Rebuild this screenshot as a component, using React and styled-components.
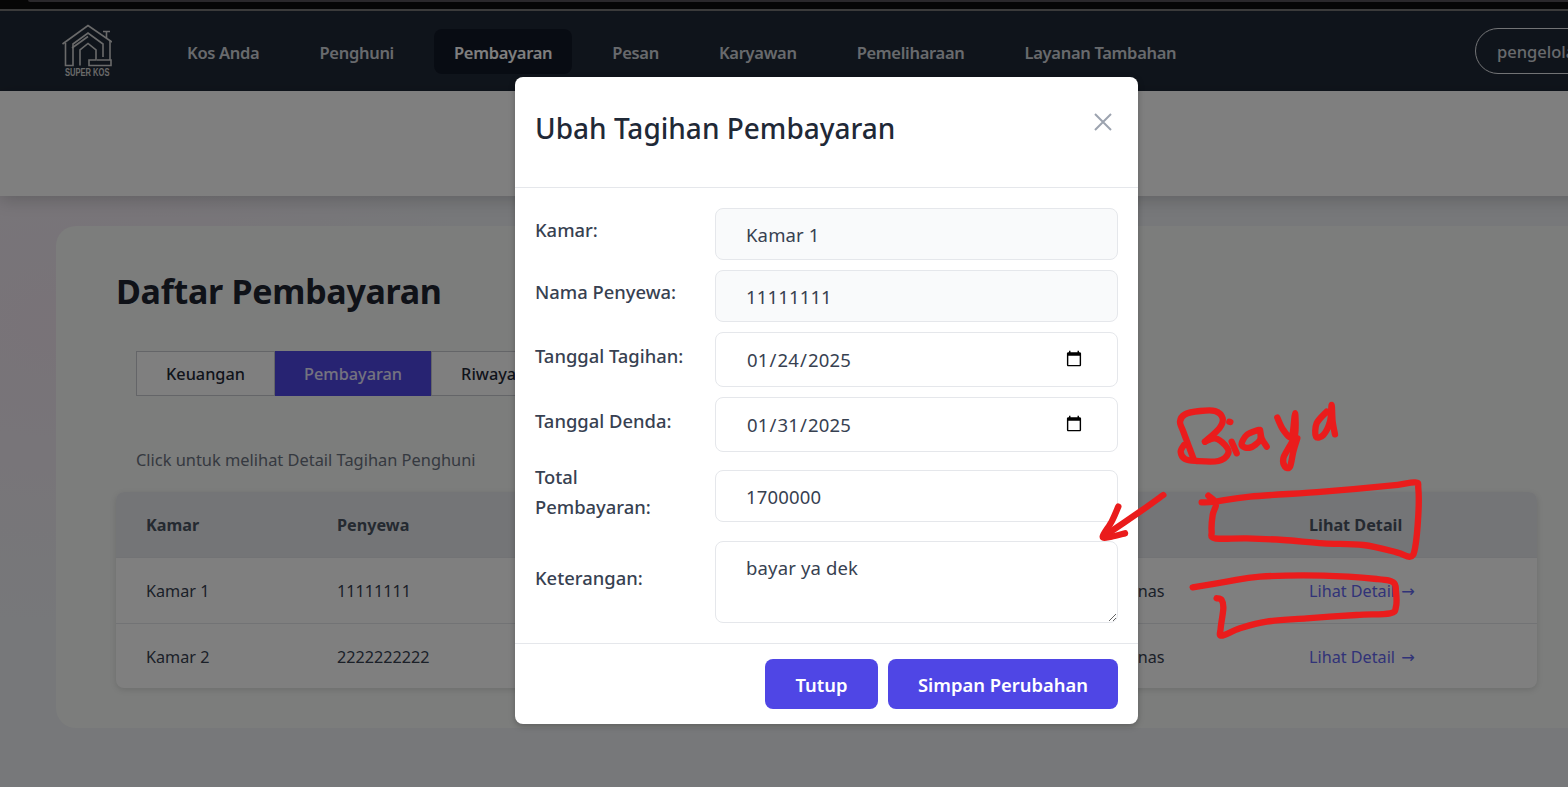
import styled, { createGlobalStyle } from 'styled-components';

const GlobalStyle = createGlobalStyle`
  * { box-sizing: border-box; }
  html, body { margin: 0; padding: 0; background: #000; }
  body { font-family: "Noto Sans", "Open Sans", sans-serif; overflow: hidden; }
`;

const NAV_ITEMS = ['Kos Anda', 'Penghuni', 'Pembayaran', 'Pesan', 'Karyawan', 'Pemeliharaan', 'Layanan Tambahan'];
const TABLE_ROWS = [
  { room: 'Kamar 1', tenant: '11111111' },
  { room: 'Kamar 2', tenant: '2222222222' },
];

// strokes read off the reference, in 3x crop coordinates
const WORD_STROKES = [
  [[100, 190], [85, 150], [70, 110], [60, 80], [75, 58], [120, 48], [165, 48], [188, 70], [178, 100], [135, 140]],
  [[135, 140], [165, 130], [195, 150], [205, 175], [175, 198], [110, 198], [75, 192], [62, 170], [72, 150]],
  [[208, 80], [211, 81]],
  [[215, 140], [230, 175]],
  [[295, 105], [260, 120], [245, 150], [270, 158], [300, 135], [300, 105], [305, 130], [320, 155]],
  [[352, 68], [370, 105], [395, 125], [405, 55], [405, 120], [385, 160], [370, 190], [375, 215], [390, 215], [400, 170], [412, 130]],
  [[500, 50], [470, 85], [468, 125], [490, 120], [510, 80], [515, 30], [518, 80], [525, 118]],
];
const BOX_STROKES = [
  [[35, 82], [75, 80], [180, 65], [400, 50], [600, 32], [675, 22], [685, 40], [685, 120], [675, 220], [660, 245], [620, 232], [520, 210], [400, 205], [280, 195], [170, 190], [75, 190], [65, 170], [68, 120], [78, 85], [55, 62]],
  [[8, 337], [110, 320], [210, 305], [400, 302], [560, 312], [610, 322], [618, 350], [618, 395], [600, 415], [500, 420], [350, 430], [230, 440], [150, 460], [95, 482], [92, 460], [100, 400], [95, 375], [80, 370]],
];
const ARROW_STROKES = [
  [[370, 345], [300, 395], [190, 470]],
  [[235, 380], [215, 425], [188, 470], [215, 470], [255, 460]],
];

const smooth = (pts) => {
  let d = `M${pts[0][0]} ${pts[0][1]}`;
  for (let i = 0; i < pts.length - 1; i++) {
    const p0 = pts[i - 1] || pts[i];
    const p1 = pts[i];
    const p2 = pts[i + 1];
    const p3 = pts[i + 2] || p2;
    const c1 = [p1[0] + (p2[0] - p0[0]) / 6, p1[1] + (p2[1] - p0[1]) / 6];
    const c2 = [p2[0] - (p3[0] - p1[0]) / 6, p2[1] - (p3[1] - p1[1]) / 6];
    d += ` C${c1[0]} ${c1[1]} ${c2[0]} ${c2[1]} ${p2[0]} ${p2[1]}`;
  }
  return d;
};

function Strokes({ x, y, list }) {
  return (
    <g transform={`translate(${x} ${y}) scale(0.3333)`}>
      {list.map((pts, i) => <path key={i} d={smooth(pts)} />)}
    </g>
  );
}

function Logo() {
  return (
    <LogoSvg viewBox="0 0 50 54">
      <g fill="none" stroke="#d4d4d4" strokeWidth="1.6">
        <path d="M0.5 20 L26 1.5 L50 18" />
        <path d="M41 7.5 H48 M44.5 7.5 V14" />
        <path d="M3.5 19 V41.5 H11 V20 L26 9 L41 20 V33" />
        <path d="M10 24 L26 12.5" />
        <path d="M18 41.5 V26 L26 19.5 L34 26 V36 H27 V41.5 H49 V36 H35" />
        <path d="M48 16 V36" />
      </g>
      <text transform="translate(3 52) scale(0.72 1)" fontFamily='"Liberation Sans", sans-serif' fontSize="10.5" fontWeight="700" fill="#d4d4d4">SUPER KOS</text>
    </LogoSvg>
  );
}

function Field({ label, children }) {
  return (
    <FieldRow>
      <FieldLabel>{label}</FieldLabel>
      {children}
    </FieldRow>
  );
}

export default function App() {
  return (
    <>
      <GlobalStyle />
      <Screen>
        <TopStrip><BrowserEdge /></TopStrip>
        <Page>
          <Nav>
            <Logo />
            <NavLinks>
              {NAV_ITEMS.map((item) => (
                <NavLink key={item} $active={item === 'Pembayaran'}>{item}</NavLink>
              ))}
            </NavLinks>
            <UserPill>pengelola</UserPill>
          </Nav>
          <SubHeader />
          <Main>
            <Card>
              <Heading>Daftar Pembayaran</Heading>
              <Tabs>
                <Tab>Keuangan</Tab>
                <Tab $active>Pembayaran</Tab>
                <Tab>Riwayat</Tab>
              </Tabs>
              <Note>Click untuk melihat Detail Tagihan Penghuni</Note>
              <Table>
                <HeadRow>
                  <span>Kamar</span>
                  <span>Penyewa</span>
                  <LinkCell>Lihat Detail</LinkCell>
                </HeadRow>
                {TABLE_ROWS.map((row) => (
                  <BodyRow key={row.room}>
                    <span>{row.room}</span>
                    <span>{row.tenant}</span>
                    <StatusCell>Belum Lunas</StatusCell>
                    <DetailLink>Lihat Detail <Arrow>→</Arrow></DetailLink>
                  </BodyRow>
                ))}
              </Table>
            </Card>
          </Main>
          <Backdrop>
            <Modal>
              <ModalHeader>
                <ModalTitle>Ubah Tagihan Pembayaran</ModalTitle>
                <CloseButton aria-label="Tutup">
                  <svg width="18" height="18" viewBox="0 0 18 18" fill="none" stroke="currentColor" strokeWidth="2">
                    <path d="M1 1 L17 17 M17 1 L1 17" />
                  </svg>
                </CloseButton>
              </ModalHeader>
              <ModalBody>
                <Field label="Kamar:"><TextInput $readonly readOnly defaultValue="Kamar 1" /></Field>
                <Field label="Nama Penyewa:"><TextInput $readonly readOnly defaultValue="11111111" /></Field>
                <Field label="Tanggal Tagihan:"><DateInput type="date" defaultValue="2025-01-24" /></Field>
                <Field label="Tanggal Denda:"><DateInput type="date" defaultValue="2025-01-31" /></Field>
                <Field label="Total Pembayaran:"><TextInput defaultValue="1700000" /></Field>
                <Field label="Keterangan:"><NoteInput defaultValue="bayar ya dek" /></Field>
              </ModalBody>
              <ModalFooter>
                <PrimaryButton $width={113}>Tutup</PrimaryButton>
                <PrimaryButton $width={230}>Simpan Perubahan</PrimaryButton>
              </ModalFooter>
            </Modal>
          </Backdrop>
        </Page>
        <Scribble viewBox="0 0 1568 787">
          <Strokes x={1160} y={395} list={WORD_STROKES} />
          <Strokes x={1190} y={475} list={BOX_STROKES} />
          <Strokes x={1040} y={380} list={ARROW_STROKES} />
        </Scribble>
      </Screen>
    </>
  );
}

const Screen = styled.div`
  position: relative;
  width: 1568px;
  height: 787px;
  overflow: hidden;
  display: flex;
  flex-direction: column;
  background: #050505;
`;

const TopStrip = styled.div`
  flex: none;
  height: 11px;
  background: #060606;
  border-bottom: 2px solid #3b3b3b;
  padding-left: 28px;
`;

const BrowserEdge = styled.div`
  height: 2px;
  background: #2a282b;
  border-bottom-left-radius: 4px;
`;

const Page = styled.div`
  position: relative;
  flex: 1;
  width: 1653px;
  background:
    radial-gradient(ellipse 420px 300px at 60px 40%, rgba(245, 222, 238, 0.55), rgba(245, 222, 238, 0) 100%),
    #eef0f4;
`;

const Nav = styled.nav`
  height: 80px;
  display: flex;
  align-items: center;
  padding: 0 40px 0 62px;
  background: #1f2937;
`;

const LogoSvg = styled.svg`
  width: 50px;
  height: 54px;
  flex: none;
  margin-right: 55px;
`;

const NavLinks = styled.div`
  display: flex;
  gap: 20px;
  flex: 1;
`;

const NavLink = styled.a`
  height: 45px;
  padding: 2px 20px 0;
  display: flex;
  align-items: center;
  border-radius: 8px;
  font-size: 16.5px;
  font-weight: 600;
  letter-spacing: -0.3px;
  color: ${(p) => (p.$active ? '#ffffff' : '#d1d5db')};
  background: ${(p) => (p.$active ? '#111827' : 'transparent')};
`;

const UserPill = styled.div`
  width: 138px;
  height: 46px;
  padding: 0 21px;
  display: flex;
  align-items: center;
  border: 1px solid #e5e7eb;
  border-radius: 23px;
  font-size: 16.5px;
  font-weight: 500;
  color: #d1d5db;
`;

const SubHeader = styled.div`
  height: 105px;
  background: #ffffff;
  box-shadow: 0 4px 16px rgba(0, 0, 0, 0.18);
  position: relative;
`;

const Main = styled.main`
  padding: 30px 56px;
`;

const Card = styled.section`
  height: 502px;
  padding: 40px 60px;
  border-radius: 20px;
  background: #f8faf8;
`;

const Heading = styled.h1`
  margin: 0 0 35px 0;
  font-size: 34px;
  line-height: 50px;
  font-weight: 700;
  letter-spacing: -0.3px;
  color: #1f2430;
`;

const Tabs = styled.div`
  display: flex;
  height: 45px;
  margin-left: 20px;
`;

const Tab = styled.div`
  padding: 1px 29px 0;
  display: flex;
  align-items: center;
  font-size: 16.3px;
  font-weight: 500;
  border: ${(p) => (p.$active ? 'none' : '1px solid #c8cbd0')};
  color: ${(p) => (p.$active ? '#e8e6ff' : '#1f2937')};
  background: ${(p) => (p.$active ? '#4f46e5' : '#ffffff')};
`;

const Note = styled.p`
  margin: 52px 0 20px 20px;
  font-size: 16.4px;
  line-height: 24px;
  color: #6b7280;
`;

const Table = styled.div`
  height: 196px;
  background: #ffffff;
  border-radius: 8px;
  box-shadow: 0 2px 6px rgba(0, 0, 0, 0.12);
  overflow: hidden;
  font-size: 16.2px;
`;

const rowColumns = '191px 729px 243px 1fr';

const HeadRow = styled.div`
  display: grid;
  grid-template-columns: ${rowColumns};
  align-items: center;
  height: 65px;
  padding-left: 30px;
  background: #e9ebef;
  font-weight: 700;
  color: #4b5563;
`;

const BodyRow = styled.div`
  display: grid;
  grid-template-columns: ${rowColumns};
  align-items: center;
  height: 66px;
  padding: 1px 0 0 30px;
  border-top: 1px solid #e5e7eb;
  color: #374151;
`;

const LinkCell = styled.span`
  grid-column: 4;
`;

const StatusCell = styled.span`
  grid-column: 3;
`;

const DetailLink = styled.a`
  grid-column: 4;
  color: #6366f1;
`;

const Arrow = styled.span`
  margin-left: 2px;
  font-family: "DejaVu Sans", sans-serif;
`;

const Backdrop = styled.div`
  position: absolute;
  inset: 0;
  display: flex;
  justify-content: center;
  align-items: flex-start;
  padding-top: 66px;
  background: rgba(0, 0, 0, 0.5);
`;

const Modal = styled.div`
  width: 623px;
  height: 647px;
  display: flex;
  flex-direction: column;
  border-radius: 8px;
  background: #ffffff;
  box-shadow: 0 2px 6px rgba(0, 0, 0, 0.25);
`;

const ModalHeader = styled.div`
  height: 111px;
  flex: none;
  display: flex;
  align-items: flex-start;
  justify-content: space-between;
  padding: 29px 26px 0 20px;
  border-bottom: 1px solid #e5e7eb;
`;

const ModalTitle = styled.h2`
  margin: 0;
  font-size: 28px;
  line-height: 44px;
  font-weight: 500;
  color: #1f2937;
`;

const CloseButton = styled.button`
  margin-top: 7px;
  padding: 0;
  border: none;
  background: none;
  color: #9ca3af;
  display: flex;
`;

const ModalBody = styled.div`
  flex: 1;
  display: flex;
  flex-direction: column;
  gap: 10px;
  padding: 20px 20px 0;
`;

const FieldRow = styled.div`
  display: flex;
  align-items: center;
`;

const FieldLabel = styled.label`
  flex: none;
  width: 180px;
  padding-right: 20px;
  margin-bottom: 8px;
  font-size: 18.4px;
  line-height: 30px;
  font-weight: 500;
  color: #374151;
`;

const TextInput = styled.input`
  flex: 1;
  min-width: 0;
  height: 52px;
  padding: 0 30px;
  border: 1px solid #e5e7eb;
  border-radius: 8px;
  outline: none;
  font-family: inherit;
  font-size: 18.5px;
  letter-spacing: 0.15px;
  color: #374151;
  background: ${(p) => (p.$readonly ? '#f9fafb' : '#ffffff')};
`;

const DateInput = styled(TextInput)`
  height: 55px;
  padding: 0 32px 0 30px;
`;

const NoteInput = styled.textarea`
  flex: 1;
  height: 82px;
  margin: 1px 0 0;
  padding: 12px 30px;
  border: 1px solid #e5e7eb;
  border-radius: 8px;
  outline: none;
  font-family: inherit;
  font-size: 18.5px;
  letter-spacing: 0.15px;
  line-height: 27px;
  color: #374151;
  background: #ffffff;
`;

const ModalFooter = styled.div`
  flex: none;
  display: flex;
  justify-content: flex-end;
  gap: 10px;
  height: 81px;
  padding: 15px 20px;
  border-top: 1px solid #e5e7eb;
`;

const PrimaryButton = styled.button`
  width: ${(p) => p.$width}px;
  height: 50px;
  border: none;
  border-radius: 8px;
  background: #4f46e5;
  color: #ffffff;
  font-family: inherit;
  font-size: 18.4px;
  font-weight: 600;
`;

const Scribble = styled.svg`
  position: absolute;
  inset: 0;
  width: 1568px;
  height: 787px;
  fill: none;
  stroke: #ea1c1c;
  stroke-width: 19;
  stroke-linecap: round;
  stroke-linejoin: round;
  pointer-events: none;
`;
